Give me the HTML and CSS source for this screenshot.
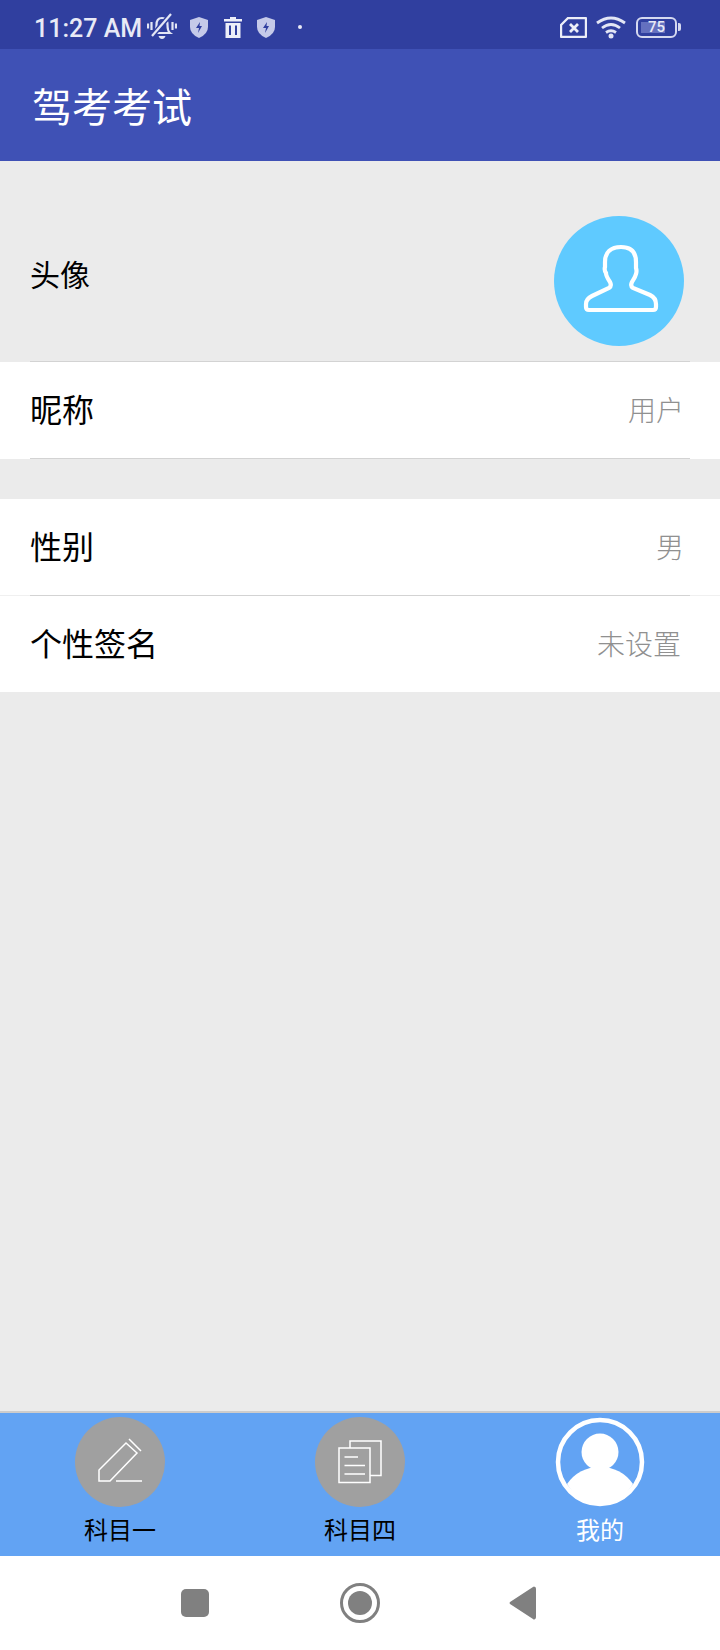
FILE: index.html
```html
<!DOCTYPE html>
<html lang="zh-CN">
<head>
    <meta charset="UTF-8">
    <title>驾考考试</title>
    <link rel="stylesheet" href="styles.css">
</head>
<body>

<div class="status-bar">
    <span class="clock">11:27 AM</span>
    <svg class="st-bell" width="30" height="28" viewBox="0 0 30 28">
        <path d="M7 20 Q9.500 18 9.500 12 Q9.500 5 15 5 Q20.500 5 20.500 12 Q20.500 18 23 20 Z" fill="none" stroke="#e3e6f5" stroke-width="2.200"/>
        <path d="M11.500 23 H18.500 Q17.500 26 15 26 Q12.500 26 11.500 23 Z" fill="#e3e6f5"/>
        <path d="M5 23 L24 1" stroke="#303f9f" stroke-width="5"/>
        <path d="M5 23 L24 1" stroke="#e3e6f5" stroke-width="2.200"/>
        <path d="M4.500 9 V17 M1 10.500 V15.500 M25.500 9 V17 M29 10.500 V15.500" stroke="#e3e6f5" stroke-width="2.200"/>
    </svg>
    <svg class="st-shield" width="18" height="21" viewBox="0 0 18 21">
        <path d="M9 0 L18 3 V10 Q18 17 9 21 Q0 17 0 10 V3 Z" fill="#c5cae9"/>
        <path d="M10 5 L6 11 H9 L8 16 L12 9 H9.500 Z" fill="#303f9f"/>
    </svg>
    <svg class="st-trash" width="18" height="21" viewBox="0 0 18 21">
        <path d="M6 0 H12 V2 H18 V4.500 H0 V2 H6 Z M1.500 6 H16.500 V21 H1.500 Z" fill="#eceef8"/>
        <path d="M6 8.500 V18 M12 8.500 V18" stroke="#303f9f" stroke-width="2"/>
    </svg>
    <svg class="st-shield" width="18" height="21" viewBox="0 0 18 21">
        <path d="M9 0 L18 3 V10 Q18 17 9 21 Q0 17 0 10 V3 Z" fill="#c5cae9"/>
        <path d="M10 5 L6 11 H9 L8 16 L12 9 H9.500 Z" fill="#303f9f"/>
    </svg>
    <span class="st-dot"></span>

    <span class="status-right">
        <svg width="27" height="21" viewBox="0 0 27 21">
            <path d="M8 1 H25 Q26 1 26 2 V19 Q26 20 25 20 H2 Q1 20 1 19 V8 Z" fill="none" stroke="#eceef8" stroke-width="2.400" stroke-linejoin="round"/>
            <path d="M10 7 L18 15 M18 7 L10 15" stroke="#eceef8" stroke-width="2.800"/>
        </svg>
        <svg width="30" height="23" viewBox="0 0 30 23">
            <path d="M1 7 Q15 -3 29 7 M6 12 Q15 5 24 12 M10 16.500 Q15 13 20 16.500" fill="none" stroke="#e3e6f5" stroke-width="2.800"/>
            <circle cx="15" cy="20" r="2.500" fill="#e3e6f5"/>
        </svg>
        <span class="battery">
            <span class="battery-body"><span class="battery-fill"></span><span class="battery-num">75</span></span>
            <span class="battery-tip"></span>
        </span>
    </span>
</div>

<div class="app-bar">驾考考试</div>

<div class="main">
    <div class="avatar-row">
        <span class="avatar-label">头像</span>
        <span class="avatar">
            <svg width="130" height="130" viewBox="0 0 130 130">
                <path d="M67 31 C77 31 82 36 82 46 V52 Q83 55 82 58 C81 62 79 64 78 66 Q76 70 79 72 L96 79 Q102 82 102 88 V91 Q102 94 99 94 H35 Q32 94 32 91 V88 Q32 83 38 80 L55 72 Q58 70 56 66 C54 63 52 60 52 57 Q50 54 51 51 V46 C51 36 57 31 67 31 Z" fill="none" stroke="#fff" stroke-width="4.200"/>
            </svg>
        </span>
    </div>
    <div class="rule"></div>

    <div class="row"><div class="row-in line-bottom"><span class="row-name">昵称</span><span class="row-value">用户</span></div></div>

    <div class="group-second">
        <div class="row row-split"><div class="row-in line-bottom"><span class="row-name">性别</span><span class="row-value">男</span></div></div>
        <div class="row row-last"><div class="row-in"><span class="row-name">个性签名</span><span class="row-value">未设置</span></div></div>
    </div>
</div>

<div class="tabs">
    <div class="tab">
        <span class="tab-icon">
            <svg width="90" height="90" viewBox="0 0 90 90" fill="none" stroke="#fff" stroke-width="1.500">
                <path d="M24 53 V64 H35 L62 36 L51 26 Z"/>
                <path d="M54 22 L66 34 M41 64 H67"/>
            </svg>
        </span>
        <span class="tab-name">科目一</span>
    </div>
    <div class="tab">
        <span class="tab-icon">
            <svg width="90" height="90" viewBox="0 0 90 90" fill="none" stroke="#fff" stroke-width="1.500">
                <path d="M24 31 H55 V65.500 H24 Z"/>
                <path d="M35 31 V24 H66 V58.500 H55"/>
                <path d="M29.500 40 H43 M29.500 48.500 H50 M29.500 57 H50"/>
            </svg>
        </span>
        <span class="tab-name">科目四</span>
    </div>
    <div class="tab tab-active">
        <span class="tab-icon">
            <svg width="90" height="90" viewBox="0 0 90 90">
                <circle cx="45" cy="45" r="42" fill="none" stroke="#fff" stroke-width="4.500"/>
                <circle cx="45" cy="35" r="18.500" fill="#fff"/>
                <path d="M12 67 Q24 50 45 50 Q66 50 78 67 Q65 88 45 88 Q25 88 12 67 Z" fill="#fff"/>
            </svg>
        </span>
        <span class="tab-name">我的</span>
    </div>
</div>

<div class="nav-bar">
    <span class="nav-square"></span>
    <span class="nav-circle"></span>
    <svg width="27" height="34" viewBox="0 0 27 34"><path d="M26 1 Q27 1 27 3 V31 Q27 33 26 33 Q25 34 24 33 L1 18 Q0 17 1 16 L24 1 Q25 0 26 1 Z" fill="#808080"/></svg>
</div>

</body>
</html>
```

FILE: styles.css
```css
* { box-sizing: border-box; }
html, body { margin: 0; padding: 0; }
body { width: 720px; height: 1650px; display: flex; flex-direction: column; font-family: "Noto Sans CJK SC", "Noto Sans", sans-serif; font-weight: 400; background-color: #ebebeb; }

.status-bar { height: 49px; flex: none; display: flex; align-items: center; padding: 5px 39px 0 34px; background-color: #303f9f; color: #e8eaf6; }
.clock { font-family: Roboto, sans-serif; font-size: 25px; font-weight: 500; margin: 2px 5px 0 0; }
.st-bell { margin-right: 13px; }
.st-shield { margin-right: 16px; }
.st-trash { margin-right: 15px; }
.st-dot { width: 4px; height: 4px; margin-left: 7px; border-radius: 50%; background-color: #e8eaf6; }
.status-right { margin-left: auto; display: flex; align-items: center; gap: 9px; }
.battery { display: flex; align-items: center; gap: 1px; margin-left: 1px; }
.battery-body { position: relative; width: 41px; height: 21px; border: 2px solid #d5d9f0; border-radius: 6px; display: flex; align-items: center; justify-content: center; }
.battery-fill { position: absolute; left: 3px; top: 3px; width: 24px; height: 11px; background-color: #6470bf; }
.battery-num { position: relative; font-family: Roboto, sans-serif; font-size: 15px; font-weight: 500; color: #e8eaf6; }
.battery-tip { width: 3px; height: 8px; border-radius: 0 2px 2px 0; background-color: #d5d9f0; }

.app-bar { height: 112px; flex: none; display: flex; align-items: center; padding-left: 32px; background-color: #3f51b5; color: #fff; font-size: 40px; }

.main { flex: 1; }
.avatar-row { height: 200px; display: flex; align-items: center; justify-content: space-between; padding: 55px 36px 15px 30px; }
.avatar-label { font-size: 30px; color: #000; margin-bottom: 16px; }
.avatar { width: 130px; height: 130px; border-radius: 50%; background-color: #5fcaff; }
.avatar svg { display: block; }
.rule { height: 1px; margin: 0 30px; background-color: #d3d3d3; }

.group-second { margin-top: 40px; }
.row { background-color: #fff; }
.row-split { border-bottom: 1px solid #f0f0f0; }
.row-split .row-in { margin-bottom: -1px; }
.row-in { height: 97px; margin: 0 30px; padding-right: 6px; display: flex; align-items: center; justify-content: space-between; }
.row-last .row-in { height: 96px; padding-right: 9px; }
.line-bottom { border-bottom: 1px solid #d3d3d3; }
.row-name { font-size: 32px; color: #000; margin-bottom: 5px; }
.row-value { font-size: 28px; font-weight: 300; color: #909090; margin-bottom: 2px; }

.tabs { height: 145px; flex: none; display: flex; padding-top: 4px; border-top: 2px solid #ccc; background-color: #62a3f3; }
.tab { flex: 1; display: flex; flex-direction: column; align-items: center; }
.tab-icon { width: 90px; height: 90px; border-radius: 50%; background-color: #a0a0a0; }
.tab-icon svg { display: block; }
.tab-name { margin-top: 5px; font-size: 24px; line-height: 34px; color: #000; }
.tab-active .tab-icon { background-color: transparent; }
.tab-active .tab-name { color: #fff; }

.nav-bar { height: 94px; flex: none; display: flex; align-items: center; justify-content: center; gap: 130px; padding-right: 3px; background-color: #fff; }
.nav-square { width: 28px; height: 28px; border-radius: 5px; background-color: #808080; }
.nav-circle { width: 40px; height: 40px; margin: 0 -1px 0 1px; border-radius: 50%; border: 3.5px solid #808080; display: flex; align-items: center; justify-content: center; }
.nav-circle::before { content: ""; width: 24px; height: 24px; border-radius: 50%; background-color: #808080; }
```
